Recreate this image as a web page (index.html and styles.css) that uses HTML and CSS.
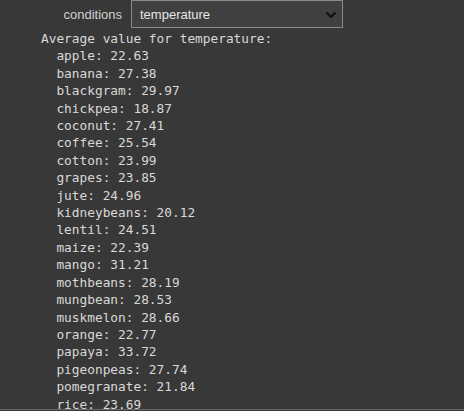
FILE: index.html
```html
<!DOCTYPE html>
<html>
<head>
<meta charset="utf-8">
<link rel="stylesheet" href="styles.css">
</head>
<body>
<div class="widget">
  <div class="row">
    <label class="label">conditions</label>
    <div class="select">
      <span class="value">temperature</span>
      <svg class="chev" width="12" height="8" viewBox="0 0 12 8"><path d="M1.5 1.5 L6 6 L10.5 1.5" fill="none" stroke="#111" stroke-width="2.2"/></svg>
    </div>
  </div>
  <pre class="out">Average value for temperature:
  apple: 22.63
  banana: 27.38
  blackgram: 29.97
  chickpea: 18.87
  coconut: 27.41
  coffee: 25.54
  cotton: 23.99
  grapes: 23.85
  jute: 24.96
  kidneybeans: 20.12
  lentil: 24.51
  maize: 22.39
  mango: 31.21
  mothbeans: 28.19
  mungbean: 28.53
  muskmelon: 28.66
  orange: 22.77
  papaya: 33.72
  pigeonpeas: 27.74
  pomegranate: 21.84
  rice: 23.69</pre>
</div>
<div class="bottom"></div>
</body>
</html>
```

FILE: styles.css
```css
html, body {
  margin: 0;
  padding: 0;
  background: #383838;
  height: 411px;
  overflow: hidden;
}
body {
  display: flex;
  flex-direction: column;
}
.widget {
  flex: 1;
  overflow: hidden;
}
.row {
  display: flex;
  align-items: center;
  height: 28px;
  gap: 9px;
}
.label {
  width: 122px;
  text-align: right;
  font-family: "Liberation Sans", Arial, sans-serif;
  font-size: 13px;
  color: #d0d0d0;
}
.select {
  box-sizing: border-box;
  width: 212px;
  height: 28px;
  border: 1px solid #8a8a8a;
  background: #404040;
  display: flex;
  align-items: center;
  justify-content: space-between;
  padding: 0 5px 0 8px;
  font-family: "Liberation Sans", Arial, sans-serif;
  font-size: 13px;
  color: #e6e6e6;
}
.chev {
  display: block;
  margin-top: 1px;
}
.out {
  margin: 2px 0 0 41px;
  font-family: "DejaVu Sans Mono", monospace;
  font-size: 12.8px;
  line-height: 17.4px;
  color: #d8d8d8;
}
.bottom {
  height: 1px;
  background: #6a6a6a;
  margin-bottom: 1px;
}
```
